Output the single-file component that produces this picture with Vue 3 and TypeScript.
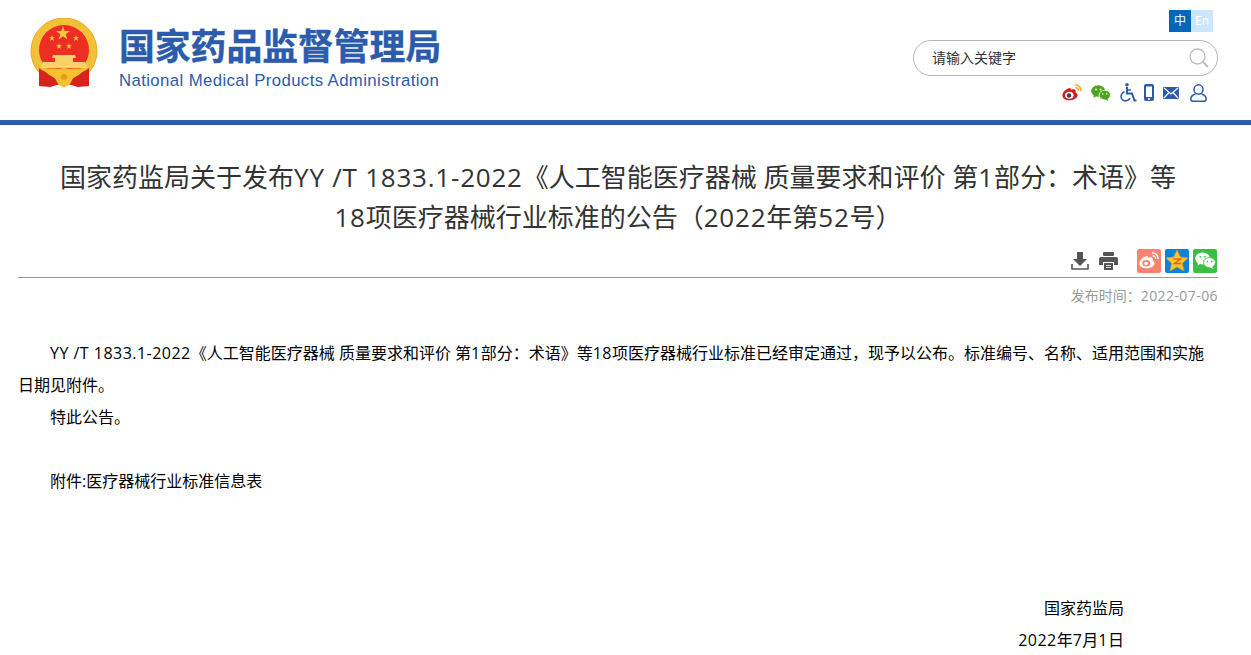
<script setup lang="ts">
const title = '国家药监局关于发布YY /T 1833.1-2022《人工智能医疗器械 质量要求和评价 第1部分：术语》等18项医疗器械行业标准的公告（2022年第52号）'
const paragraphs = [
  'YY /T 1833.1-2022《人工智能医疗器械 质量要求和评价 第1部分：术语》等18项医疗器械行业标准已经审定通过，现予以公布。标准编号、名称、适用范围和实施日期见附件。',
  '特此公告。'
]

// latin runs get a little tracking so they sit as wide as in the original font
function runs(text: string) {
  return text.split(/([A-Za-z0-9/.\-]+(?: [A-Za-z0-9/.\-]+)*)/).filter(Boolean).map((part) => ({
    part,
    latin: /^[A-Za-z0-9]/.test(part)
  }))
}
</script>

<template>
  <div class="page">
    <header class="header">
      <div class="brand">
        <svg class="emblem" width="68" height="70" viewBox="0 0 68 70">
          <circle cx="34" cy="33" r="33" fill="#f4c038" />
          <circle cx="34" cy="33" r="33" fill="none" stroke="#e8a526" stroke-width="1" />
          <circle cx="34" cy="32" r="25" fill="#ee2d24" />
          <polygon points="33,8 34.700,13 40,13 35.700,16.200 37.300,21.500 33,18.200 28.700,21.500 30.300,16.200 26,13 31.300,13" fill="#f6c93e" />
          <polygon points="22,17 22.800,19.200 25,19.200 23.200,20.600 23.900,23 22,21.500 20.100,23 20.800,20.600 19,19.200 21.200,19.200" fill="#f6c93e" />
          <polygon points="46,17 46.800,19.200 49,19.200 47.200,20.600 47.900,23 46,21.500 44.100,23 44.800,20.600 43,19.200 45.200,19.200" fill="#f6c93e" />
          <polygon points="29,25 29.800,27.200 32,27.200 30.200,28.600 30.900,31 29,29.500 27.100,31 27.800,28.600 26,27.200 28.200,27.200" fill="#f6c93e" />
          <polygon points="39,25 39.800,27.200 42,27.200 40.200,28.600 40.900,31 39,29.500 37.100,31 37.800,28.600 36,27.200 38.200,27.200" fill="#f6c93e" />
          <path d="M23 37 H45 L46 40 H43 V44 H55 L58 50 H10 L13 44 H25 V40 H22 Z" fill="#f8d268" />
          <path d="M9 50 C14 54 18 55 22 55 L34 58 L46 55 C50 55 54 54 59 50 V68 L48 69 L34 65 L20 69 L9 68 Z" fill="#d8231c" />
          <path d="M14 52 C20 49 28 52 34 50 C40 52 48 49 54 52 C50 58 44 58 42 62 C40 67 37 69 34 69 C31 69 28 67 26 62 C24 58 18 58 14 52 Z" fill="#f4c02f" />
          <circle cx="34" cy="59" r="3" fill="#e39a1f" />
        </svg>
        <div class="brand-text">
          <div class="brand-cn">国家药品监督管理局</div>
          <div class="brand-en">National Medical Products Administration</div>
        </div>
      </div>

      <div class="tools">
        <div class="lang">
          <span class="lang-cn">中</span>
          <span class="lang-en">En</span>
        </div>
        <div class="search">
          <span class="search-text">请输入关键字</span>
          <svg width="20" height="20" viewBox="0 0 20 20" fill="none" stroke="#bdbdbd">
            <circle cx="8.500" cy="8.500" r="7.500" stroke-width="1.300" />
            <path d="M14 14 L19 19" stroke-width="2" />
          </svg>
        </div>
        <div class="quick">
          <svg width="20" height="17" viewBox="0 0 20 17">
            <path d="M8 4 C3 5 0 9 0.500 12 C1 15.500 5 16.500 8.500 16.200 C13 15.800 16 13.500 15.500 10.500 C15.200 9 14 8.800 13.500 8.400 C14.200 6.500 13.500 5.200 11.500 5.200 C10 5.200 9 6 8.800 5.800 C9 4.800 9 4 8 4 Z" fill="#e2141c" />
            <ellipse cx="7.300" cy="11.300" rx="4.300" ry="3.500" fill="#fff" />
            <circle cx="7" cy="11.500" r="2.200" fill="#444" />
            <path d="M13 1 C16.500 0.600 19.500 3.500 19 7 M13.500 3.700 C15.300 3.500 16.800 5 16.500 6.800" fill="none" stroke="#f0a81c" stroke-width="1.500" />
          </svg>
          <svg width="20" height="16" viewBox="0 0 20 16">
            <ellipse cx="7.200" cy="6" rx="7" ry="5.700" fill="#4ca61c" />
            <path d="M3 9 L2.500 13 L7 10 Z" fill="#4ca61c" />
            <ellipse cx="13.800" cy="10" rx="5.700" ry="4.800" fill="#4ca61c" stroke="#fff" stroke-width="0.800" />
            <path d="M16 13 L17.500 16 L13 14 Z" fill="#4ca61c" />
            <circle cx="5" cy="4.500" r="0.900" fill="#fff" />
            <circle cx="9.500" cy="4.500" r="0.900" fill="#fff" />
            <circle cx="11.800" cy="9" r="0.800" fill="#fff" />
            <circle cx="15.800" cy="9" r="0.800" fill="#fff" />
          </svg>
          <svg width="17" height="19" viewBox="0 0 17 19" fill="none" stroke="#2c5bab">
            <circle cx="7" cy="1.800" r="1.800" fill="#2c5bab" stroke="none" />
            <path d="M7 4 V10.500 H12 L14.500 17.500 H16.500" stroke-width="2" />
            <path d="M7 7 H11" stroke-width="1.500" />
            <path d="M4.500 8.500 C1.500 10 0.500 13 1.500 15.500 C3 18.500 8 19 10 15" stroke-width="1.600" />
          </svg>
          <svg class="phone" width="10" height="17" viewBox="0 0 10 17">
            <rect x="0" y="0" width="10" height="17" rx="2" fill="#2c5bab" />
            <rect x="2" y="2.500" width="6" height="10.500" fill="#fff" />
            <circle cx="5" cy="15" r="1" fill="#fff" />
          </svg>
          <svg width="16" height="12" viewBox="0 0 16 12">
            <rect width="16" height="12" rx="1" fill="#2c5bab" />
            <path d="M1 1 L8 7 L15 1 M1 11 L6 5.500 M15 11 L10 5.500" fill="none" stroke="#fff" stroke-width="1.200" />
          </svg>
          <svg class="user" width="17" height="18" viewBox="0 0 17 18" fill="none" stroke="#2c5bab" stroke-width="1.500">
            <ellipse cx="8.500" cy="5.500" rx="4.500" ry="4.700" />
            <path d="M5.500 10 C2.500 11 0.800 13 0.800 15 C0.800 16.500 1.800 17.200 3 17.200 H14 C15.200 17.200 16.200 16.500 16.200 15 C16.200 13 14.500 11 11.500 10" />
          </svg>
        </div>
      </div>
    </header>

    <main class="article">
      <h1 class="title"><span v-for="(r, i) in runs(title)" :key="i" :class="{ latin: r.latin }">{{ r.part }}</span></h1>

      <div class="actions">
        <svg width="18" height="18" viewBox="0 0 18 18" fill="#555">
          <path d="M6 0 H12 V7 H16 L9 14 L2 7 H6 Z" />
          <path d="M1 12 V17 H17 V12" fill="none" stroke="#555" stroke-width="1.600" />
        </svg>
        <svg class="print" width="19" height="18" viewBox="0 0 19 18" fill="#555">
          <rect x="4" y="0" width="11" height="4" rx="1" />
          <path d="M2 5 H17 Q19 5 19 7 V13 H15 V10 H4 V13 H0 V7 Q0 5 2 5 Z" />
          <rect x="5" y="11" width="9" height="7" rx="0.500" />
          <path d="M7 13.500 H12 M7 15.500 H12" stroke="#fff" stroke-width="0.800" />
        </svg>
        <div class="share share-weibo">
          <svg width="20" height="17" viewBox="0 0 20 17">
            <path d="M8 4 C3 5 0 9 0.500 12 C1 15.500 5 16.500 8.500 16.200 C13 15.800 16 13.500 15.500 10.500 C15.200 9 14 8.800 13.500 8.400 C14.200 6.500 13.500 5.200 11.500 5.200 C10 5.200 9 6 8.800 5.800 C9 4.800 9 4 8 4 Z" fill="#fff" />
            <ellipse cx="7.300" cy="11.300" rx="4" ry="3.200" fill="#f98370" />
            <circle cx="7" cy="11.500" r="1.800" fill="#fff" />
            <path d="M13 1 C16.500 0.600 19.500 3.500 19 7 M13.500 3.700 C15.300 3.500 16.800 5 16.500 6.800" fill="none" stroke="#fff" stroke-width="1.400" />
          </svg>
        </div>
        <div class="share share-qzone">
          <svg width="22" height="21" viewBox="0 0 22 21">
            <polygon points="11,0 14.300,7 22,8 16.300,13.200 18,21 11,17 4,21 5.700,13.200 0,8 7.700,7" fill="#fbc52b" stroke="#ea9c1a" stroke-width="0.600" />
            <path d="M7.500 9 H14.500 L8.500 13.500 H15" fill="none" stroke="#e0651c" stroke-width="1.500" />
          </svg>
        </div>
        <div class="share share-wechat">
          <svg width="21" height="17" viewBox="0 0 20 16">
            <ellipse cx="7.200" cy="6" rx="7" ry="5.700" fill="#fff" />
            <path d="M3 9 L2.500 13 L7 10 Z" fill="#fff" />
            <ellipse cx="13.800" cy="10" rx="5.700" ry="4.800" fill="#fff" stroke="#3dbd45" stroke-width="0.800" />
            <path d="M16 13 L17.500 16 L13 14 Z" fill="#fff" />
            <circle cx="5" cy="4.500" r="0.900" fill="#3dbd45" />
            <circle cx="9.500" cy="4.500" r="0.900" fill="#3dbd45" />
            <circle cx="11.800" cy="9" r="0.800" fill="#3dbd45" />
            <circle cx="15.800" cy="9" r="0.800" fill="#3dbd45" />
          </svg>
        </div>
      </div>

      <div class="date">发布时间：<span class="latin">2022-07-06</span></div>

      <div class="body">
        <p v-for="text in paragraphs" :key="text"><span v-for="(r, i) in runs(text)" :key="i" :class="{ latin: r.latin }">{{ r.part }}</span></p>
        <p class="blank"></p>
        <p>附件:医疗器械行业标准信息表</p>
        <div class="signature">
          <div>国家药监局</div>
          <div><span class="latin">2022</span>年<span class="latin">7</span>月<span class="latin">1</span>日</div>
        </div>
      </div>
    </main>
  </div>
</template>

<style>
html,
body {
  margin: 0;
  background: #fff;
  overflow: hidden;
}
</style>

<style scoped>
.page {
  width: 1251px;
  height: 655px;
  overflow: hidden;
  font-family: "Open Sans", "Noto Sans CJK SC", sans-serif;
  color: #000;
}
.latin {
  letter-spacing: 0.03em;
}
.header {
  height: 120px;
  border-bottom: 5px solid #2c5bab;
  display: flex;
  justify-content: space-between;
  padding: 0 33px 0 30px;
}
.brand {
  display: flex;
  align-items: flex-start;
  padding-top: 18px;
}
.emblem {
  margin-right: 21px;
}
.brand-text {
  color: #2c5bab;
}
.brand-cn {
  font-family: "Noto Sans CJK SC", sans-serif;
  font-size: 35.800px;
  font-weight: 700;
  line-height: 44px;
  margin-top: 4px;
  white-space: nowrap;
  -webkit-text-stroke: 0.4px #2c5bab;
}
.brand-en {
  font-family: "Liberation Sans", sans-serif;
  font-size: 16.800px;
  letter-spacing: 0.38px;
  line-height: 24px;
  white-space: nowrap;
  margin-top: 3px;
}
.tools {
  width: 305px;
  display: flex;
  flex-direction: column;
  align-items: flex-end;
}
.lang {
  display: flex;
  margin: 10px 5px 0 0;
}
.lang span {
  width: 22px;
  height: 22px;
  line-height: 21px;
  text-align: center;
  font-size: 12px;
  color: #fff;
}
.lang-cn {
  background: #0068b7;
}
.lang-en {
  background: #cce6ff;
}
.search {
  box-sizing: border-box;
  width: 305px;
  height: 36px;
  margin-top: 8px;
  border: 1px solid #b5b5b5;
  border-radius: 18px;
  display: flex;
  align-items: center;
  justify-content: space-between;
  padding: 0 8px 0 19px;
}
.search-text {
  font-size: 14px;
  color: #333;
  margin: -2px 0 0 -1px;
}
.quick {
  display: flex;
  align-items: center;
  gap: 9px;
  margin-top: 7px;
  padding-right: 11px;
}
.phone {
  margin-left: -2px;
}
.user {
  margin-left: 2px;
}
.article {
  width: 1200px;
  margin-left: 18px;
}
.title {
  margin: 0;
  padding: 32px 35px 0;
  height: 89px;
  font-size: 26px;
  line-height: 40px;
  font-weight: 400;
  color: #333;
  text-align: center;
}
.actions {
  box-sizing: border-box;
  height: 32px;
  border-bottom: 1px solid #999;
  display: flex;
  align-items: center;
  justify-content: flex-end;
  padding: 0 1px 2px 0;
}
.print {
  margin-left: 10px;
  margin-right: 19px;
}
.share {
  width: 24px;
  height: 24px;
  border-radius: 2px;
  margin-left: 4px;
  display: flex;
  align-items: center;
  justify-content: center;
}
.share-weibo {
  margin-left: 0;
  background: #f98370;
}
.share-qzone {
  background: #0d83d8;
}
.share-wechat {
  background: #3dbd45;
}
.date {
  text-align: right;
  font-size: 14px;
  line-height: 20px;
  margin-top: 8px;
  color: #999;
}
.body {
  margin-top: 31px;
  font-size: 16px;
  line-height: 32px;
}
.body p {
  margin: 0;
  text-indent: 32px;
}
.blank {
  height: 32px;
}
.signature {
  margin-top: 95px;
  text-align: right;
  padding-right: 94px;
}
</style>
